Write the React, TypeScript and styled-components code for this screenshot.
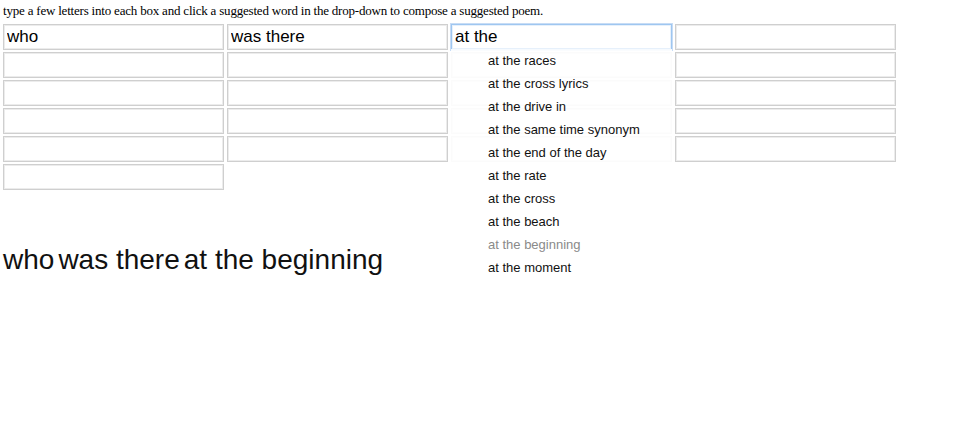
import React from "react";
import styled, { createGlobalStyle } from "styled-components";

const Global = createGlobalStyle`
  html, body { margin: 0; padding: 0; background: #fff; }
  body { font-family: "Liberation Serif", "Times New Roman", serif; color: #000; }
`;

const Page = styled.div`
  padding: 3px 3px 0 3px;
`;

const Intro = styled.p`
  margin: 0 0 5px 0;
  font-size: 13px;
  letter-spacing: -0.2px;
  line-height: 16px;
  color: #000;
`;

const Grid = styled.div`
  display: grid;
  grid-template-columns: repeat(4, 221px);
  column-gap: 3px;
  row-gap: 2px;
`;

const Field = styled.div`
  position: relative;
  height: 26px;
`;

const Box = styled.input<{ $focused?: boolean }>`
  box-sizing: border-box;
  width: 221px;
  height: 26px;
  margin: 0;
  padding: 0 0 0 3px;
  font-family: "Liberation Sans", Arial, sans-serif;
  font-size: 17px;
  color: #000;
  background: #fff;
  border: 1px solid ${(p) => (p.$focused ? "#9ec6f0" : "#cfcfcf")};
  box-shadow: ${(p) =>
    p.$focused
      ? "0 0 0 1px #c7dcf5, inset 0 0 0 1px #e6f0fb"
      : "inset 0 0 0 1px #ececec"};
  outline: none;
`;

const Dropdown = styled.ul`
  position: absolute;
  top: 25px;
  left: 0;
  width: 221px;
  margin: 0;
  padding: 0 0 0 37px;
  box-sizing: border-box;
  list-style: none;
  background: rgba(255, 255, 255, 0.9);
  z-index: 2;
`;

const Option = styled.li<{ $muted?: boolean }>`
  height: 23px;
  line-height: 23px;
  font-family: "Liberation Sans", Arial, sans-serif;
  font-size: 13px;
  color: ${(p) => (p.$muted ? "#8a8a8a" : "#111")};
  white-space: nowrap;
  cursor: pointer;
`;

const Poem = styled.div`
  margin-top: 54px;
  display: flex;
  gap: 4px;
  font-family: "Liberation Sans", Arial, sans-serif;
  font-size: 28px;
  line-height: 32px;
  color: #111;
`;

const Word = styled.span``;

const suggestions = [
  "at the races",
  "at the cross lyrics",
  "at the drive in",
  "at the same time synonym",
  "at the end of the day",
  "at the rate",
  "at the cross",
  "at the beach",
  "at the beginning",
  "at the moment",
];

const cells: { value: string; focused?: boolean; dropdown?: boolean }[] = [
  { value: "who" },
  { value: "was there" },
  { value: "at the", focused: true, dropdown: true },
  { value: "" },
  ...Array.from({ length: 16 }, () => ({ value: "" })),
  { value: "" },
];

export default function App() {
  return (
    <Page>
      <Global />
      <Intro>
        type a few letters into each box and click a suggested word in the
        drop-down to compose a suggested poem.
      </Intro>
      <Grid>
        {cells.map((c, i) => (
          <Field key={i}>
            <Box defaultValue={c.value} $focused={c.focused} />
            {c.dropdown && (
              <Dropdown>
                {suggestions.map((s) => (
                  <Option key={s} $muted={s === "at the beginning"}>
                    {s}
                  </Option>
                ))}
              </Dropdown>
            )}
          </Field>
        ))}
      </Grid>
      <Poem>
        <Word>who</Word>
        <Word>was there</Word>
        <Word>at the beginning</Word>
      </Poem>
    </Page>
  );
}
